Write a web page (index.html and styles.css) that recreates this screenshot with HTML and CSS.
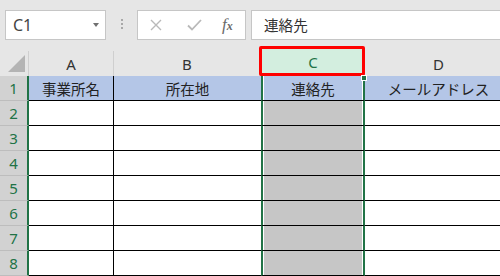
FILE: index.html
```html
<!DOCTYPE html>
<html lang="ja">
<head>
    <meta charset="UTF-8">
    <title>Excel</title>
    <link rel="stylesheet" href="styles.css">
</head>
<body>
    <div class="toolbar">
        <div class="name-box">
            <span class="name-text">C1</span>
            <span class="name-arrow"></span>
        </div>
        <div class="grip"><i></i><i></i><i></i></div>
        <div class="fx-buttons">
            <svg class="btn-cancel" width="12" height="12" viewBox="0 0 12 12">
                <path d="M1 1L11 11M11 1L1 11" stroke="#b9b9b9" stroke-width="1.4" fill="none"/>
            </svg>
            <svg class="btn-enter" width="15" height="12" viewBox="0 0 15 12">
                <path d="M1 6.5L5 10.5L14 1" stroke="#b9b9b9" stroke-width="1.8" fill="none"/>
            </svg>
            <span class="fx"><i>f</i><i class="fx-x">x</i></span>
        </div>
        <div class="formula-input">連絡先</div>
    </div>

    <div class="sheet">
        <!-- header row -->
        <div class="corner"><span class="corner-tri"></span></div>
        <div class="col-head">A</div>
        <div class="col-head">B</div>
        <div class="col-head selected">C</div>
        <div class="col-head">D</div>

        <div class="row-head">1</div>
        <div class="cell title">事業所名</div>
        <div class="cell title">所在地</div>
        <div class="cell title sel active">連絡先<span class="fill-handle"></span></div>
        <div class="cell title">メールアドレス</div>

        <div class="row-head">2</div>
        <div class="cell"></div>
        <div class="cell"></div>
        <div class="cell sel"></div>
        <div class="cell"></div>

        <div class="row-head">3</div>
        <div class="cell"></div>
        <div class="cell"></div>
        <div class="cell sel"></div>
        <div class="cell"></div>

        <div class="row-head">4</div>
        <div class="cell"></div>
        <div class="cell"></div>
        <div class="cell sel"></div>
        <div class="cell"></div>

        <div class="row-head">5</div>
        <div class="cell"></div>
        <div class="cell"></div>
        <div class="cell sel"></div>
        <div class="cell"></div>

        <div class="row-head">6</div>
        <div class="cell"></div>
        <div class="cell"></div>
        <div class="cell sel"></div>
        <div class="cell"></div>

        <div class="row-head">7</div>
        <div class="cell"></div>
        <div class="cell"></div>
        <div class="cell sel"></div>
        <div class="cell"></div>

        <div class="row-head">8</div>
        <div class="cell"></div>
        <div class="cell"></div>
        <div class="cell sel"></div>
        <div class="cell"></div>
    </div>
</body>
</html>
```

FILE: styles.css
```css
:root {
    --bar-bg: #e6e6e6;
    --box-border: #c6c6c6;
    --head-bg: #d2d2d2;
    --excel-green: #217346;
    --title-blue: #b4c6e7;
    --sel-gray: #c6c6c6;
}

body, html {
    margin: 0;
    padding: 0;
    width: 500px;
    height: 276px;
    overflow: hidden;
    background: #fff;
    font-family: "Noto Sans CJK JP", "Noto Sans", sans-serif;
}

/* formula bar */
.toolbar {
    display: flex;
    align-items: flex-start;
    height: 48px;
    padding: 10px 0 0 5px;
    box-sizing: border-box;
    background: var(--bar-bg);
}

.name-box {
    display: flex;
    align-items: center;
    justify-content: space-between;
    width: 101px;
    height: 30px;
    box-sizing: border-box;
    padding: 0 6px 0 7px;
    background: #fff;
    border: 1px solid var(--box-border);
}

.name-text {
    font-family: "Noto Sans", sans-serif;
    font-size: 16px;
    color: #444;
}

.name-arrow {
    width: 0;
    height: 0;
    border-left: 3.5px solid transparent;
    border-right: 3.5px solid transparent;
    border-top: 4px solid #707070;
}

.grip {
    display: flex;
    flex-direction: column;
    align-items: center;
    gap: 2px;
    width: 31px;
    padding-top: 9px;
}

.grip i {
    width: 2px;
    height: 2px;
    background: #a8a8a8;
}

.fx-buttons {
    display: flex;
    align-items: center;
    width: 109px;
    height: 30px;
    box-sizing: border-box;
    padding-left: 12px;
    background: #fff;
    border: 1px solid var(--box-border);
}

.btn-enter {
    margin-left: 25px;
}

.fx {
    margin-left: 20px;
    font-family: "Liberation Serif", serif;
    font-size: 17px;
    color: #6a6a6a;
}

.fx-x {
    font-size: 12px;
    font-weight: bold;
}

.formula-input {
    flex: 1;
    height: 30px;
    margin-left: 5px;
    box-sizing: border-box;
    padding-left: 12px;
    line-height: 28px;
    font-size: 14.6px;
    color: #333;
    background: #fff;
    border: 1px solid var(--box-border);
    border-right: none;
}

/* sheet */
.sheet {
    display: grid;
    grid-template-columns: 29px 85px 147px 104px 148px;
    grid-template-rows: 28px repeat(8, 25px);
    background: var(--bar-bg);
}

.corner {
    position: relative;
    border-right: 1px solid #cfcfcf;
    margin-top: 3px;
}

.corner-tri {
    position: absolute;
    right: 3px;
    bottom: 4px;
    width: 0;
    height: 0;
    border-left: 17px solid transparent;
    border-bottom: 17px solid #b4b4b4;
}

.col-head {
    display: flex;
    align-items: center;
    justify-content: center;
    margin-top: 3px;
    border-right: 1px solid #cfcfcf;
    font-family: "Noto Sans", sans-serif;
    font-size: 15px;
    color: #333;
}

.col-head.selected {
    position: relative;
    margin-top: 0;
    border-right: none;
    background: #d3eedf;
    color: var(--excel-green);
}

.col-head.selected::after {
    content: "";
    position: absolute;
    top: -2px;
    left: -2px;
    right: 0;
    bottom: 0;
    border: 3px solid #ff0000;
    border-radius: 2px;
}

.row-head {
    display: flex;
    align-items: center;
    justify-content: center;
    background: var(--head-bg);
    border-right: 2px solid var(--excel-green);
    border-bottom: 1px solid #bdbdbd;
    font-family: "Noto Sans", sans-serif;
    font-size: 15px;
    color: var(--excel-green);
}

.cell {
    display: flex;
    align-items: center;
    justify-content: center;
    background: #fff;
    border-bottom: 1px solid #000;
    border-right: 1px solid #000;
    font-size: 14.5px;
    color: #222;
    white-space: nowrap;
}

.cell:nth-child(5n+3) {
    border-right: none;
}

.cell.title {
    background: var(--title-blue);
}

.cell.sel {
    position: relative;
    background: var(--sel-gray);
    border-left: 2px solid var(--excel-green);
    border-right: 2px solid var(--excel-green);
    box-shadow: inset 1px 0 #fff, inset -1px 0 #fff;
}

.cell.sel.active {
    background: var(--title-blue);
}

.fill-handle {
    position: absolute;
    top: -1px;
    right: -4px;
    width: 4px;
    height: 4px;
    background: var(--excel-green);
    border: 1px solid #fff;
}
```
